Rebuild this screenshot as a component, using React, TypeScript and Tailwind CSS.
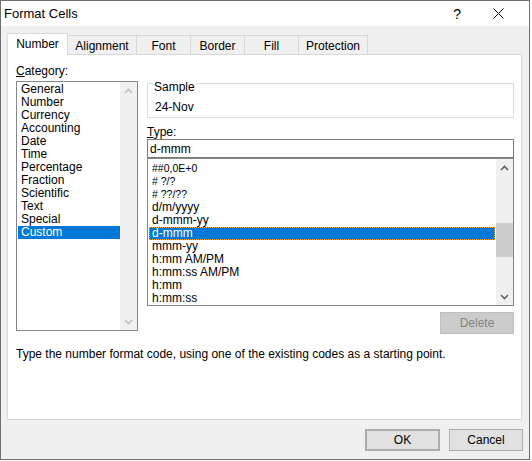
import React from 'react';

const categories = ['General', 'Number', 'Currency', 'Accounting', 'Date', 'Time', 'Percentage', 'Fraction', 'Scientific', 'Text', 'Special', 'Custom'];

const typeCodes: { code: string; small?: boolean }[] = [
  { code: '##0,0E+0', small: true },
  { code: '# ?/?', small: true },
  { code: '# ??/??', small: true },
  { code: 'd/m/yyyy' },
  { code: 'd-mmm-yy' },
  { code: 'd-mmm' },
  { code: 'mmm-yy' },
  { code: 'h:mm AM/PM' },
  { code: 'h:mm:ss AM/PM' },
  { code: 'h:mm' },
  { code: 'h:mm:ss' },
];

const tabs = [
  { label: 'Alignment', w: 'w-[69px]' },
  { label: 'Font', w: 'w-[54px]' },
  { label: 'Border', w: 'w-[54px]' },
  { label: 'Fill', w: 'w-[54px]' },
  { label: 'Protection', w: 'w-[69px]' },
];

// 滚动条小箭头
const Chevron: React.FC<{ up?: boolean; color: string }> = ({ up, color }) => (
  <svg width="9" height="6" viewBox="0 0 9 6">
    <polyline
      points={up ? '1,5 4.5,1.5 8,5' : '1,1 4.5,4.5 8,1'}
      fill="none"
      stroke={color}
      strokeWidth={1.6}
    />
  </svg>
);

const btnClass = 'h-[22px] flex items-center justify-center bg-[#e1e1e1] border border-[#adadad] text-[12px]';

const App: React.FC = () => {
  return (
    <div className="w-[532px] h-[461px] bg-white">
      <div className="w-[530px] h-[460px] border border-[#707070] bg-[#f0f0f0] flex flex-col text-black text-[12px] font-['Liberation_Sans',Arial,sans-serif]">
        {/* 标题栏 */}
        <div className="h-[25px] bg-white flex items-center shrink-0">
          <div className="pl-[3px] text-[13px] leading-[16px]">Format Cells</div>
          <div className="ml-auto text-[14px] leading-[16px] mr-[32px]">?</div>
          <svg width="11" height="11" viewBox="0 0 11 11" className="mr-[25px]">
            <path d="M0.5 0.5 L10.5 10.5 M10.5 0.5 L0.5 10.5" stroke="#000" strokeWidth={1} />
          </svg>
        </div>

        <div className="flex-1 flex flex-col pl-[6px] pt-[7px]">
          {/* Tabs */}
          <div className="relative z-10 h-[22px] mb-[-1px] flex">
            <div className="w-[61px] h-[22px] bg-white border-l border-r border-t border-[#d9d9d9] flex items-center justify-center pb-[2px] leading-[14px]">
              Number
            </div>
            {tabs.map(t => (
              <div
                key={t.label}
                className={`${t.w} mt-[2px] h-[19px] border-t border-r border-[#d9d9d9] flex items-center justify-center pt-[1px] leading-[14px]`}
              >
                {t.label}
              </div>
            ))}
          </div>

          {/* 面板 */}
          <div className="w-[515px] h-[366px] bg-white border border-[#d9d9d9] flex flex-col">
            <div className="h-[279px] flex pl-[8px]">
              {/* Category */}
              <div className="w-[122px] pt-[10px] flex flex-col">
                <div className="h-[13px] leading-[13px]">
                  <span className="underline">C</span>ategory:
                </div>
                <div className="mt-[3px] h-[250px] border border-[#828790] flex">
                  <div className="flex-1 pt-[1px] pl-[1px] flex flex-col">
                    {categories.map(c => (
                      <div
                        key={c}
                        className={`h-[13px] leading-[13px] pl-[3px] ${c === 'Custom' ? 'bg-[#0078d7] text-white' : ''}`}
                      >
                        {c}
                      </div>
                    ))}
                  </div>
                  <div className="w-[17px] bg-[#f0f0f0] flex flex-col justify-between">
                    <div className="h-[17px] flex items-center justify-center">
                      <Chevron up color="#bfbfbf" />
                    </div>
                    <div className="h-[17px] flex items-center justify-center">
                      <Chevron color="#bfbfbf" />
                    </div>
                  </div>
                </div>
              </div>

              {/* 右侧 */}
              <div className="ml-[9px] w-[367px] pt-[28px] flex flex-col">
                <div className="relative h-[35px] border border-[#dcdcdc] pl-[7px] pt-[17px] leading-[13px]">
                  <span className="absolute left-[5px] top-[-3px] px-[1px] bg-white leading-[13px]">Sample</span>
                  24-Nov
                </div>
                <div className="mt-[8px] h-[13px] leading-[13px]">
                  <span className="underline">T</span>ype:
                </div>
                <div className="h-[19px] border border-[#7a7a7a] flex items-center pl-[2px] leading-[14px]">d-mmm</div>
                <div className="h-[148px] border border-[#828790] flex">
                  <div className="flex-1 pt-[3px] pl-[1px] pr-[1px] flex flex-col">
                    {typeCodes.map(t => (
                      <div
                        key={t.code}
                        className={`h-[13px] leading-[11px] pl-[2px] ${t.small ? 'text-[10.5px]' : ''} ${
                          t.code === 'd-mmm'
                            ? 'bg-[#0078d7] text-white border border-dotted border-[#f5a623]'
                            : 'border border-transparent'
                        }`}
                      >
                        {t.code}
                      </div>
                    ))}
                  </div>
                  <div className="w-[17px] bg-[#f0f0f0] flex flex-col">
                    <div className="h-[17px] flex items-center justify-center">
                      <Chevron up color="#606060" />
                    </div>
                    <div className="flex-1">
                      <div className="mt-[47px] h-[34px] bg-[#cdcdcd]" />
                    </div>
                    <div className="h-[17px] flex items-center justify-center">
                      <Chevron color="#606060" />
                    </div>
                  </div>
                </div>
                <div className="self-end mt-[6px] w-[74px] h-[22px] bg-[#cccccc] border border-[#bfbfbf] text-[#838383] flex items-center justify-center">
                  Delete
                </div>
              </div>
            </div>

            <div className="mt-[13px] pl-[8px] leading-[14px]">
              Type the number format code, using one of the existing codes as a starting point.
            </div>
          </div>

          {/* 按钮 */}
          <div className="mt-[9px] flex justify-end gap-[9px] pr-[6px]">
            <div className={`${btnClass} w-[75px] border-2 border-[#0078d7]`}>OK</div>
            <div className={`${btnClass} w-[74px]`}>Cancel</div>
          </div>
        </div>
      </div>
    </div>
  );
};

export default App;
